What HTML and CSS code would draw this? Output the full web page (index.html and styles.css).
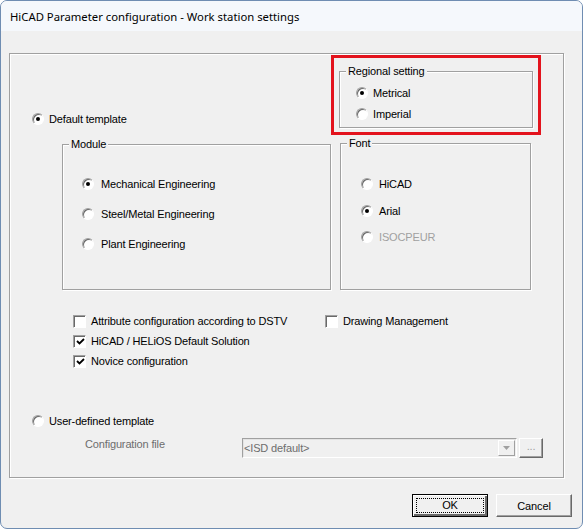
FILE: index.html
```html
<!DOCTYPE html>
<html lang="en">
<head>
<meta charset="UTF-8">
<title>HiCAD Parameter configuration - Work station settings</title>
<link rel="stylesheet" href="styles.css">
</head>
<body>
<div class="window">
  <div class="titlebar">HiCAD Parameter configuration - Work station settings</div>

  <div class="client">
    <div class="frame">
      <div class="top">
        <div class="left-col">
          <div class="radio default-row"><span class="dot checked"></span>Default template</div>
          <div class="group module">
            <span class="group-title">Module</span>
            <div class="radio"><span class="dot checked"></span>Mechanical Engineering</div>
            <div class="radio"><span class="dot"></span>Steel/Metal Engineering</div>
            <div class="radio"><span class="dot"></span>Plant Engineering</div>
          </div>
        </div>

        <div class="right-col">
          <div class="highlight">
            <div class="group regional">
              <span class="group-title">Regional setting</span>
              <div class="radio"><span class="dot checked"></span>Metrical</div>
              <div class="radio"><span class="dot"></span>Imperial</div>
            </div>
          </div>
          <div class="group font">
            <span class="group-title">Font</span>
            <div class="radio"><span class="dot"></span>HiCAD</div>
            <div class="radio"><span class="dot checked"></span>Arial</div>
            <div class="radio disabled"><span class="dot"></span>ISOCPEUR</div>
          </div>
        </div>
      </div>

      <div class="checks">
        <div class="check-row">
          <div class="check wide"><span class="box"></span>Attribute configuration according to DSTV</div>
          <div class="check"><span class="box"></span>Drawing Management</div>
        </div>
        <div class="check-row">
          <div class="check"><span class="box"><svg width="9" height="9" viewBox="0 0 9 9"><polyline points="1,4 3.5,6.5 8,2" fill="none" stroke="#000" stroke-width="1.8"/></svg></span>HiCAD / HELiOS Default Solution</div>
        </div>
        <div class="check-row">
          <div class="check"><span class="box"><svg width="9" height="9" viewBox="0 0 9 9"><polyline points="1,4 3.5,6.5 8,2" fill="none" stroke="#000" stroke-width="1.8"/></svg></span>Novice configuration</div>
        </div>
      </div>

      <div class="radio user-row"><span class="dot"></span>User-defined template</div>

      <div class="config-row">
        <span class="config-label">Configuration file</span>
        <div class="combo">
          <span class="combo-text">&lt;ISD default&gt;</span>
          <span class="combo-btn"><svg width="7" height="4" viewBox="0 0 7 4"><polygon points="0,0 7,0 3.5,4" fill="#a0a0a0"/></svg></span>
        </div>
        <div class="browse">...</div>
      </div>
    </div>

    <div class="buttons">
      <button class="btn default"><span class="focus">OK</span></button>
      <button class="btn">Cancel</button>
    </div>
  </div>
</div>
</body>
</html>
```

FILE: styles.css
```css
body {
  margin: 0;
  background-color: #ffffff;
  font-family: "Liberation Sans", Arial, sans-serif;
  font-size: 11px;
  letter-spacing: -0.15px;
  color: #000;
}

.window {
  width: 583px;
  height: 529px;
  box-sizing: border-box;
  border: 1px solid #6f8db2;
  border-radius: 7px;
  background-color: #f0f0f0;
  overflow: hidden;
  display: flex;
  flex-direction: column;
}

.titlebar {
  height: 30px;
  line-height: 31px;
  padding-left: 9px;
  background-color: #f5f8fc;
  font-family: "Segoe UI", "Noto Sans", sans-serif;
  font-size: 11.3px;
  letter-spacing: 0;
}

.client {
  flex: 1;
  padding: 22px 10px 0 8px;
}

/* big outer box */
.frame {
  width: 555px;
  height: 425px;
  box-sizing: border-box;
  border: 1px solid #a0a0a0;
  box-shadow: 1px 1px 0 #fff, inset 1px 1px 0 #fff;
}

.top {
  display: flex;
}

.left-col {
  width: 321px;
  padding-top: 58px;
}

.right-col {
  padding-top: 1px;
}

/* group boxes */
.group {
  position: relative;
  box-sizing: border-box;
  border: 1px solid #a0a0a0;
  box-shadow: 1px 1px 0 #fff, inset 1px 1px 0 #fff;
  display: flex;
  flex-direction: column;
}

.group-title {
  position: absolute;
  top: -7px;
  left: 6px;
  padding: 0 2px;
  line-height: 13px;
  background-color: #f0f0f0;
}

.module {
  width: 269px;
  height: 146px;
  margin: 18px 0 0 52px;
  padding: 29px 0 0 19px;
  gap: 10px;
}

.module .radio {
  gap: 7px;
}

.highlight {
  width: 210px;
  box-sizing: border-box;
  border: 3px solid #e3131d;
  padding: 13px 5px 4px 5px;
}

.regional {
  width: 194px;
  height: 57px;
  padding: 11px 0 0 16px;
  gap: 1px;
}

.font {
  width: 191px;
  height: 147px;
  margin: 8px 0 0 9px;
  padding: 30px 0 0 20px;
  gap: 6.5px;
}

.font .radio {
  gap: 6px;
}

/* radio buttons */
.radio {
  display: flex;
  align-items: center;
  gap: 5px;
  height: 20px;
}

.radio.disabled {
  color: #a0a0a0;
}

.dot {
  width: 12px;
  height: 12px;
  box-sizing: border-box;
  border-radius: 50%;
  border: 1px solid;
  border-color: #a0a0a0 #fff #fff #a0a0a0;
  background-color: #fff;
  box-shadow: inset 1px 1px 0 #696969;
  display: flex;
  align-items: center;
  justify-content: center;
}

.dot.checked::after {
  content: "";
  width: 4px;
  height: 4px;
  border-radius: 50%;
  background-color: #000;
}

.default-row {
  height: 14px;
  margin-left: 22px;
}

.user-row {
  height: 14px;
  margin: 43px 0 0 22px;
}

/* check boxes */
.checks {
  margin: 21px 0 0 63px;
}

.check-row {
  display: flex;
  height: 20px;
}

.check {
  display: flex;
  align-items: center;
  gap: 5px;
}

.check.wide {
  width: 252px;
}

.box {
  width: 13px;
  height: 13px;
  box-sizing: border-box;
  border: 1px solid;
  border-color: #a0a0a0 #fff #fff #a0a0a0;
  box-shadow: inset 1px 1px 0 #696969;
  background-color: #fff;
  display: flex;
  align-items: center;
  justify-content: center;
  padding: 1px 0 0 1px;
}

/* configuration file row */
.config-row {
  display: flex;
  align-items: flex-start;
  margin-top: 8px;
}

.config-label {
  width: 157px;
  margin: 2px 0 0 75px;
  line-height: 13px;
  color: #6d6d6d;
}

.combo {
  width: 275px;
  height: 20px;
  margin-top: 2px;
  box-sizing: border-box;
  border: 1px solid;
  border-color: #a0a0a0 #fff #fff #a0a0a0;
  box-shadow: inset 1px 1px 0 #e3e3e3;
  display: flex;
  align-items: center;
  justify-content: space-between;
  color: #6d6d6d;
}

.combo-text {
  padding-left: 1px;
}

.combo-btn {
  width: 17px;
  height: 16px;
  box-sizing: border-box;
  margin-right: 1px;
  border: 1px solid;
  border-color: #fff #a0a0a0 #a0a0a0 #fff;
  display: flex;
  align-items: center;
  justify-content: center;
}

.browse {
  width: 24px;
  height: 20px;
  margin: 2px 0 0 2px;
  box-sizing: border-box;
  border: 1px solid;
  border-color: #fff #696969 #696969 #fff;
  box-shadow: inset -1px -1px 0 #a0a0a0;
  text-align: center;
  line-height: 14px;
  color: #a0a0a0;
}

/* dialog buttons */
.buttons {
  display: flex;
  justify-content: flex-end;
  gap: 8px;
  margin-top: 16px;
}

.btn {
  width: 76px;
  height: 23px;
  padding: 0;
  box-sizing: border-box;
  border: 1px solid;
  border-color: #fff #696969 #696969 #fff;
  box-shadow: inset -1px -1px 0 #a0a0a0;
  background-color: #f0f0f0;
  font-family: "Liberation Sans", Arial, sans-serif;
  font-size: 11px;
  letter-spacing: -0.15px;
  color: #000;
}

.btn.default {
  border: 1px solid #000;
  box-shadow: inset 1px 1px 0 #fff, inset -2px -2px 0 #696969;
  padding: 3px;
}

.focus {
  display: block;
  height: 100%;
  box-sizing: border-box;
  border: 1px dotted #000;
  line-height: 13px;
}
```
